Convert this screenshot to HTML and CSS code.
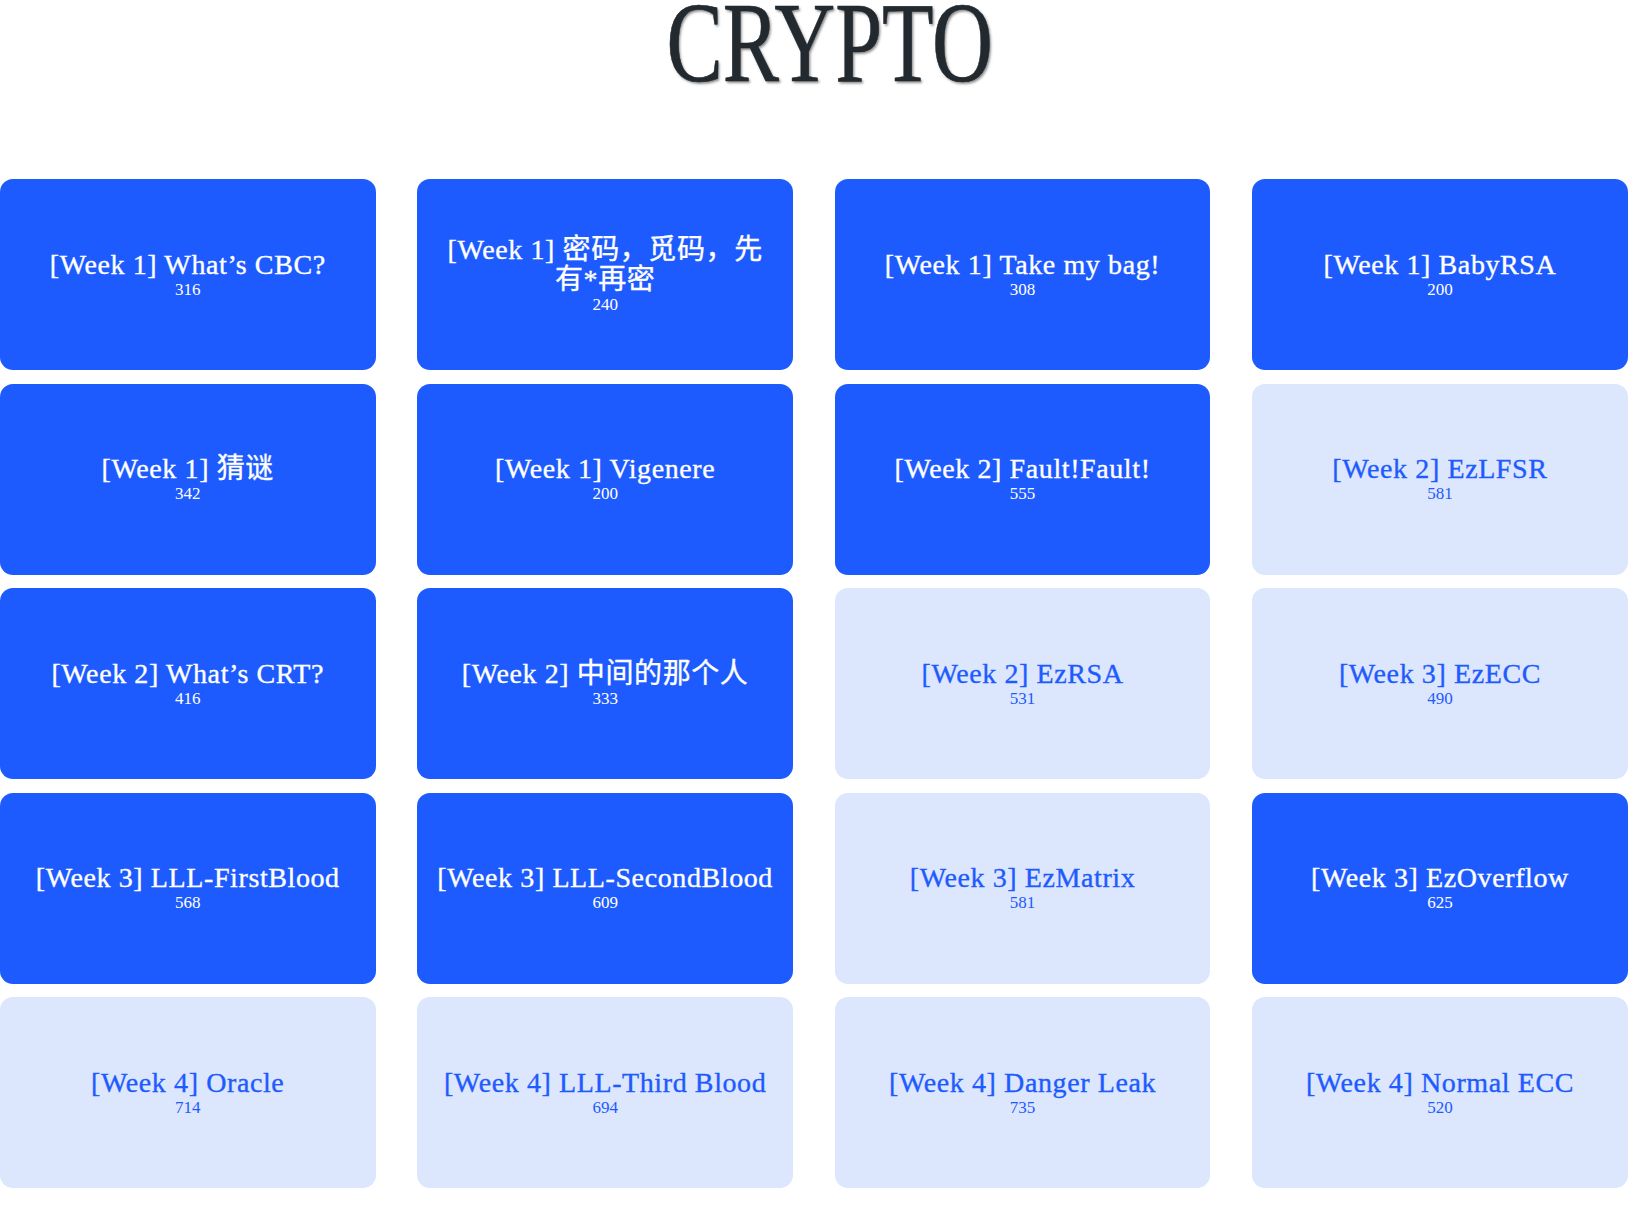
FILE: index.html
```html
<!DOCTYPE html>
<html lang="zh">
<head>
<meta charset="utf-8">
<title>CRYPTO</title>
<link rel="stylesheet" href="styles.css">
</head>
<body>
<header class="page-head">
  <h1 class="category-title">CRYPTO</h1>
</header>
<main class="challenge-grid">
  <div class="card solved"><div class="card-title">[Week 1] What’s CBC?</div><div class="card-score">316</div></div>
  <div class="card solved"><div class="card-title">[Week 1] 密码，觅码，先有*再密</div><div class="card-score">240</div></div>
  <div class="card solved"><div class="card-title">[Week 1] Take my bag!</div><div class="card-score">308</div></div>
  <div class="card solved"><div class="card-title">[Week 1] BabyRSA</div><div class="card-score">200</div></div>

  <div class="card solved"><div class="card-title">[Week 1] 猜谜</div><div class="card-score">342</div></div>
  <div class="card solved"><div class="card-title">[Week 1] Vigenere</div><div class="card-score">200</div></div>
  <div class="card solved"><div class="card-title">[Week 2] Fault!Fault!</div><div class="card-score">555</div></div>
  <div class="card"><div class="card-title">[Week 2] EzLFSR</div><div class="card-score">581</div></div>

  <div class="card solved"><div class="card-title">[Week 2] What’s CRT?</div><div class="card-score">416</div></div>
  <div class="card solved"><div class="card-title">[Week 2] 中间的那个人</div><div class="card-score">333</div></div>
  <div class="card"><div class="card-title">[Week 2] EzRSA</div><div class="card-score">531</div></div>
  <div class="card"><div class="card-title">[Week 3] EzECC</div><div class="card-score">490</div></div>

  <div class="card solved"><div class="card-title">[Week 3] LLL-FirstBlood</div><div class="card-score">568</div></div>
  <div class="card solved"><div class="card-title">[Week 3] LLL-SecondBlood</div><div class="card-score">609</div></div>
  <div class="card"><div class="card-title">[Week 3] EzMatrix</div><div class="card-score">581</div></div>
  <div class="card solved"><div class="card-title">[Week 3] EzOverflow</div><div class="card-score">625</div></div>

  <div class="card"><div class="card-title">[Week 4] Oracle</div><div class="card-score">714</div></div>
  <div class="card"><div class="card-title">[Week 4] LLL-Third Blood</div><div class="card-score">694</div></div>
  <div class="card"><div class="card-title">[Week 4] Danger Leak</div><div class="card-score">735</div></div>
  <div class="card"><div class="card-title">[Week 4] Normal ECC</div><div class="card-score">520</div></div>
</main>
</body>
</html>
```

FILE: styles.css
```css
html, body {
  margin: 0;
  padding: 0;
  background: #ffffff;
}

body {
  font-family: "Liberation Serif", "Noto Sans CJK SC", serif;
  color: #24292e;
}

.page-head {
  display: flex;
  justify-content: center;
  padding-left: 14px;
}

.category-title {
  margin: 0;
  font-family: "Liberation Serif", serif;
  font-weight: normal;
  font-size: 114px;
  line-height: 86px;
  height: 86px;
  color: #22292f;
  -webkit-text-stroke: 0.6px #22292f;
  text-shadow: 2px 2px 3px rgba(0, 0, 0, 0.45);
  transform: scaleX(0.74);
}

.challenge-grid {
  display: grid;
  grid-template-columns: repeat(4, 375.5px);
  grid-auto-rows: 191px;
  column-gap: 41.9px;
  row-gap: 13.5px;
  margin-top: 93px;
  padding-bottom: 22px;
}

.card {
  display: flex;
  flex-direction: column;
  justify-content: center;
  align-items: center;
  text-align: center;
  padding: 0 18px;
  border-radius: 13px;
  background: #dce6fd;
  color: #1e5bff;
}

.card.solved {
  background: #1e5bff;
  color: #ffffff;
}

.card-title {
  font-size: 28px;
  line-height: 30px;
  letter-spacing: 0.6px;
  -webkit-text-stroke: 0.35px currentColor;
}

.card-score {
  font-size: 17px;
  line-height: 20px;
}
```
